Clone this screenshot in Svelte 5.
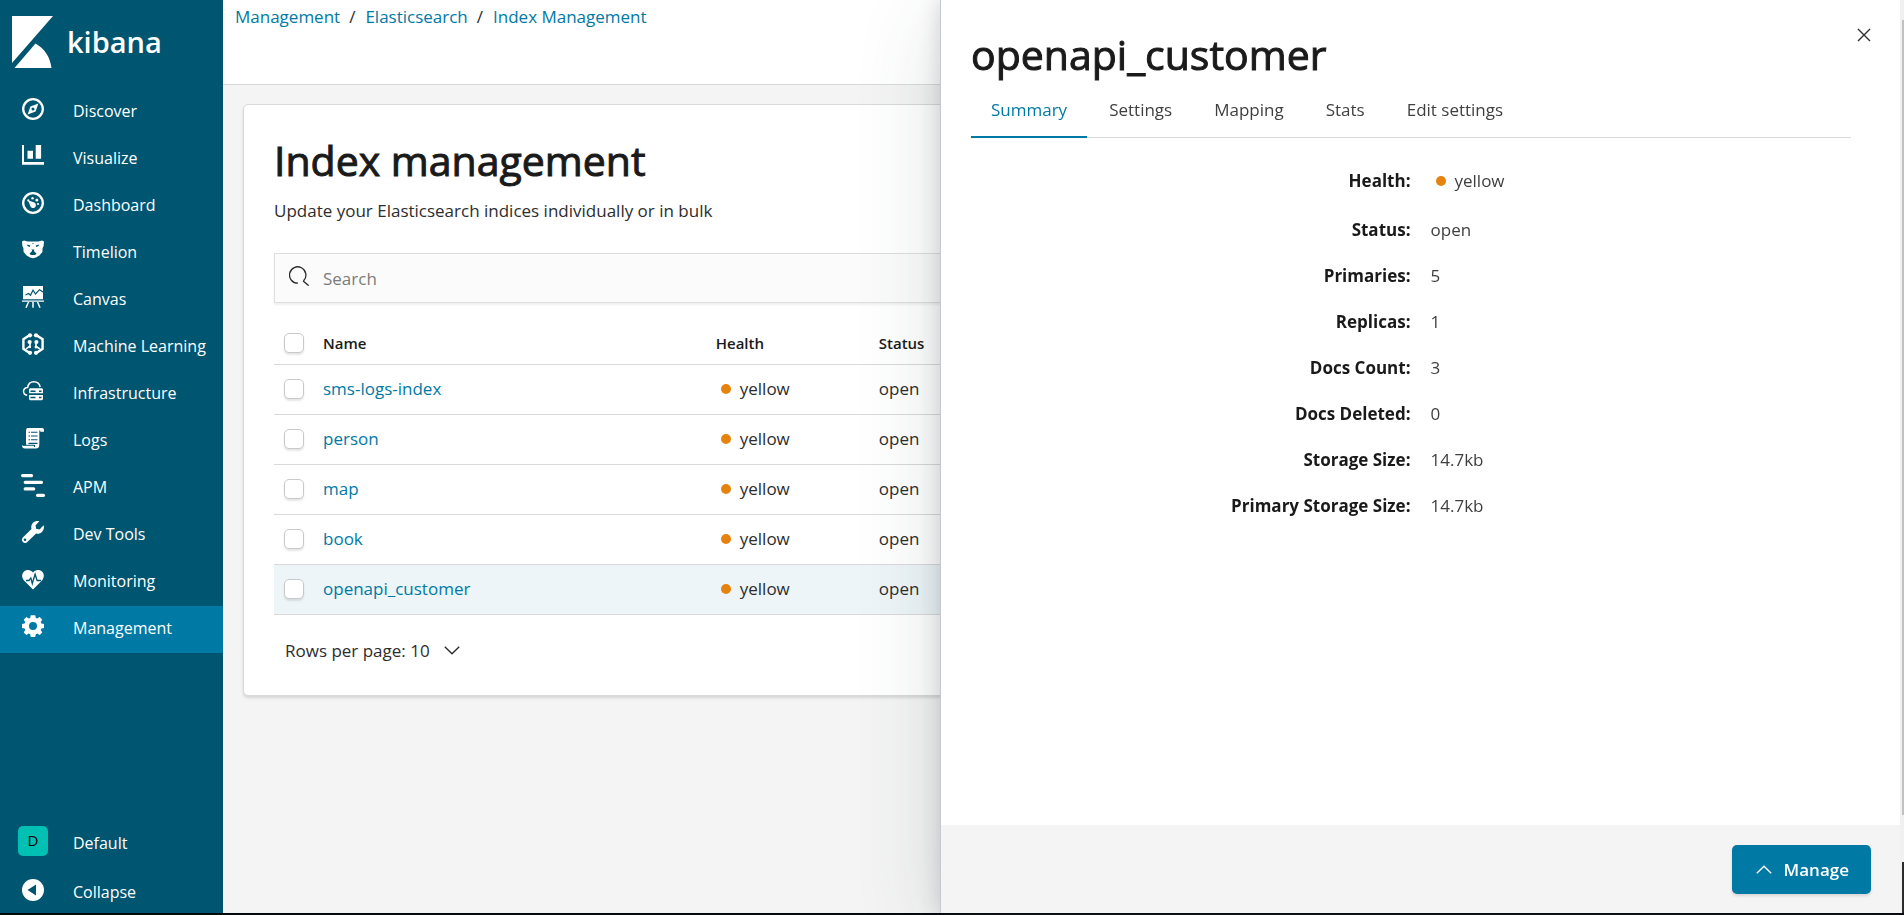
<script>
  const apps = ['Discover', 'Visualize', 'Dashboard', 'Timelion', 'Canvas', 'Machine Learning', 'Infrastructure', 'Logs', 'APM', 'Dev Tools', 'Monitoring', 'Management'];
  const crumbs = ['Management', 'Elasticsearch', 'Index Management'];
  const indices = ['sms-logs-index', 'person', 'map', 'book', 'openapi_customer'];
  const tabs = ['Summary', 'Settings', 'Mapping', 'Stats', 'Edit settings'];
  const details = [
    ['Health:', 'yellow'],
    ['Status:', 'open'],
    ['Primaries:', '5'],
    ['Replicas:', '1'],
    ['Docs Count:', '3'],
    ['Docs Deleted:', '0'],
    ['Storage Size:', '14.7kb'],
    ['Primary Storage Size:', '14.7kb']
  ];
  let activeTab = $state('Summary');
  let selected = $state('openapi_customer');
</script>

{#snippet icon(name)}
  <svg class="app-icon" viewBox="0 0 22 22" aria-hidden="true">
    {#if name === 'Discover'}
      <circle cx="11" cy="11" r="9.8" fill="none" stroke="currentColor" stroke-width="2.3" />
      <path fill="currentColor" fill-rule="evenodd" d="M16.4 5.6 13.6 13.4 5.6 16.4 8.4 8.6ZM11 9.5a1.5 1.5 0 1 0 0 3 1.5 1.5 0 0 0 0-3Z" />
    {:else if name === 'Visualize'}
      <path fill="currentColor" d="M0 0h2v17h20v2.8H0ZM5.5 5.8H11v8H5.5ZM13.7 0h5.4v13.8h-5.4Z" />
    {:else if name === 'Dashboard'}
      <circle cx="11" cy="11" r="9.8" fill="none" stroke="currentColor" stroke-width="2.3" />
      <path fill="currentColor" d="M6 8.2 12.4 10.6a2.9 2.9 0 1 1-4.2 3.2Z" />
      <g fill="currentColor"><circle cx="10.5" cy="6.2" r="1.2" /><circle cx="14.8" cy="8" r="1.5" /><circle cx="16" cy="12" r="1.1" /><circle cx="6.3" cy="8.4" r="1.1" /></g>
    {:else if name === 'Timelion'}
      <path fill="currentColor" d="M0 2.500 2 1.500 5.500 2.600h11L20 1.500l2 1-.4 4.500-1 2-.2 4-3 3.400-3.400 2-3 .8-3-.8-3.400-2-3-3.400-.2-4-1-2Z" />
      <path fill="#005571" d="m5.300 5.400 3 1.200-.5 1.300-2.500-.8ZM16.700 5.400l-3 1.200.5 1.300 2.500-.8ZM9.500 10.600h3l-.7 1.400 2.700 2.400-1.300 1.500H8.800l-1.300-1.500 2.700-2.400ZM10 4.300h2l-1 1Z" />
    {:else if name === 'Canvas'}
      <path fill="currentColor" d="M1 0h20v13.3H1ZM0 14.4h22v1.4H0Z" />
      <path fill="none" stroke="#005571" stroke-width="1.2" d="m3.5 9 3-1.5 2 1.7 2.5-5L13.5 8l4-4.3L21 6" />
      <path fill="none" stroke="currentColor" stroke-width="1.5" d="M6.5 16 4 21.8M11 16v5.8M15.5 16l2.5 5.8" />
    {:else if name === 'Machine Learning'}
      <path fill="none" stroke="currentColor" stroke-width="2.4" d="M8.3 1.8 1.4 6.2v9.6l6.6 4.4M13.7 1.8l6.9 4.4v9.6L14 20.2" />
      <path fill="none" stroke="currentColor" stroke-width="1.6" d="M8 9v3.8L4 16M14 8.5v4.8l4 2.7" />
      <g fill="currentColor"><circle cx="8" cy="2.3" r="2.1" /><circle cx="14" cy="2.3" r="2.1" /><circle cx="7.6" cy="9" r="2.1" /><circle cx="14.4" cy="9" r="2.1" /><circle cx="8" cy="19.8" r="2.1" /><circle cx="14" cy="19.8" r="2.1" /><circle cx="14" cy="14" r="1.5" /><circle cx="8" cy="14" r="1.2" /></g>
    {:else if name === 'Infrastructure'}
      <path fill="none" stroke="currentColor" stroke-width="1.5" d="M5.2 15.2C2.8 14.8 1.5 13.3 1.5 11.2S3.2 7.6 5.6 7.6C6.2 4 8.4 1.8 11.8 1.8c3.6 0 5.9 2.1 6.3 5.4" />
      <path fill="currentColor" d="M8 8.3h12l1 1v4H7v-4ZM7 15h14v4.2l-1 1H8l-1-1Z" />
      <path stroke="#005571" stroke-width="1.5" d="M8.5 11.3h5M17 11.3h2.5M8.5 17.6h5M17 17.6h2.5" />
    {:else if name === 'Logs'}
      <path fill="currentColor" d="M5 1h14.6v2.5h-2.3V18c0 2.4-1.3 3.6-3.4 3.6H3C1.2 21.6 0 20.5 0 18.6h4V5.5C4 3 4.2 1.8 5 1Z" />
      <path fill="currentColor" d="M18.3 4.8V2.500c0-1 .8-1.500 1.800-1.500s1.900.7 1.900 1.900v1.900Z" />
      <path stroke="#005571" stroke-width="1.1" d="M6.500 5.300H8M9 5.300h6.500M6.500 9H8M9 9h6.500M6.500 12.700H8M9 12.700h6.500M6.500 16.400h9M1 18.200h11.500M12.500 18v2" />
    {:else if name === 'APM'}
      <path stroke="currentColor" stroke-width="3.2" stroke-linecap="round" d="M.6 1.600h9M3.200 8.300h16.300M3.200 14.900h8.500M15.500 21.300h6" />
    {:else if name === 'Dev Tools'}
      <path fill="currentColor" fill-rule="evenodd" d="M17.300.3c-2-.7-4.500-.3-6.300 1.500-1.700 1.700-2.100 4-1.500 6.200L.8 16.500c-1.200 1.300-1.200 3.300.1 4.500 1.200 1.200 3.200 1.200 4.500 0l8.700-8.500c2.100.5 4.300 0 5.900-1.600 1.900-1.800 2.400-4.400 1.600-6.600L17.500 8.400l-3.300-.6-.7-3.400ZM3 17.500a1.300 1.300 0 1 1 0 2.600 1.300 1.300 0 0 1 0-2.600Z" />
    {:else if name === 'Monitoring'}
      <path fill="currentColor" d="M11 4.500C9 1.500 4.800 1.200 2.300 3.300-.4 5.700-.6 9.500 2 12.500l9 9 9-9c2.600-3 2.400-6.800-.3-9.200C17.200 1.200 13 1.500 11 4.500Z" />
      <path fill="none" stroke="#005571" stroke-width="1.3" d="M4 12.500h3l1.800-2.600 1.500 5.600 2.800-9.300 2 6.300h4" />
    {:else}
      <path fill="currentColor" fill-rule="evenodd" d="M8.800.2h4.400l.6 2.700 1.500.7L17.700 2 20.300 4.700 18.700 7l.7 1.500 2.600.5v4l-2.600.6-.7 1.500 1.600 2.300-2.700 2.700-2.300-1.500-1.500.6-.6 2.800H8.800l-.6-2.800-1.500-.6-2.300 1.500-2.700-2.700 1.500-2.300-.6-1.500L0 13V9l2.600-.5L3.200 7 1.700 4.700 4.400 2l2.300 1.500 1.500-.6ZM11 7a4 4 0 1 0 0 8 4 4 0 0 0 0-8Z" />
    {/if}
  </svg>
{/snippet}

<div class="page">
  <div class="workspace">
    <nav class="sidebar" aria-label="Applications">
      <a class="brand" href="#home">
        <svg class="brand-mark" viewBox="0 0 41 52" aria-hidden="true">
          <path fill="currentColor" d="M0 0h41L0 47ZM23.5 27.5C33 33 38 41 39.5 52H2.5Z" />
        </svg>
        <span>kibana</span>
      </a>
      <ul class="apps">
        {#each apps as app}
          <li><a class="nav-link" class:current={app === 'Management'} href="#{app}">{@render icon(app)}<span>{app}</span></a></li>
        {/each}
      </ul>
      <div class="sidebar-foot">
        <a class="nav-link" href="#spaces"><span class="space">D</span><span class="label">Default</span></a>
        <button class="nav-link" type="button">
          <svg class="app-icon" viewBox="0 0 22 22" aria-hidden="true"><path fill="currentColor" fill-rule="evenodd" d="M11 0a11 11 0 1 1 0 22 11 11 0 0 1 0-22ZM14 5.500 5.500 11l8.500 5.500Z" /></svg>
          <span class="label">Collapse</span>
        </button>
      </div>
    </nav>

    <main>
      <header>
        <ol class="crumbs">
          {#each crumbs as crumb}<li><a href="#{crumb}">{crumb}</a></li>{/each}
        </ol>
      </header>
      <section class="card">
        <h1>Index management</h1>
        <p>Update your Elasticsearch indices individually or in bulk</p>
        <div class="search">
          <svg viewBox="0 0 20 20" aria-hidden="true"><path fill="none" stroke="currentColor" stroke-width="1.3" d="M9 17.200A8.200 8.200 0 1 1 14.800 14.500L14.500 15.200 19.600 19.600" /></svg>
          <input type="search" placeholder="Search" aria-label="Search" />
        </div>
        <table>
          <colgroup><col class="col-check" /><col class="col-name" /><col class="col-health" /><col /></colgroup>
          <thead>
            <tr><th><input type="checkbox" aria-label="Select all rows" /></th><th>Name</th><th>Health</th><th>Status</th></tr>
          </thead>
          <tbody>
            {#each indices as name}
              <tr class:selected={name === selected}>
                <td><input type="checkbox" aria-label="Select {name}" /></td>
                <td><button class="link" type="button" onclick={() => (selected = name)}>{name}</button></td>
                <td><span class="health"><i></i>yellow</span></td>
                <td>open</td>
              </tr>
            {/each}
          </tbody>
        </table>
        <button class="rows" type="button">
          Rows per page: 10
          <svg viewBox="0 0 16 9" aria-hidden="true"><path fill="none" stroke="currentColor" stroke-width="1.4" d="m.8.8 7.200 7 7.200-7" /></svg>
        </button>
      </section>
    </main>
  </div>

  <div class="taskbar"></div>

  <aside class="flyout" aria-labelledby="flyout-title">
    <button class="close" type="button" aria-label="Close">
      <svg viewBox="0 0 14 14" aria-hidden="true"><path stroke="currentColor" stroke-width="1.4" d="m1 1 12 12M13 1 1 13" /></svg>
    </button>
    <div class="flyout-head">
      <h2 id="flyout-title">openapi_customer</h2>
      <div class="tabs" role="tablist">
        {#each tabs as tab}
          <button type="button" role="tab" aria-selected={tab === activeTab} onclick={() => (activeTab = tab)}>{tab}</button>
        {/each}
      </div>
    </div>
    <dl>
      {#each details as [label, value]}
        <div class="detail">
          <dt>{label}</dt>
          <dd>{#if value === 'yellow'}<span class="health"><i></i>{value}</span>{:else}{value}{/if}</dd>
        </div>
      {/each}
    </dl>
    <footer>
      <button class="manage" type="button">
        <svg viewBox="0 0 16 9" aria-hidden="true"><path fill="none" stroke="currentColor" stroke-width="1.4" d="m.8 8.200 7.200-7 7.200 7" /></svg>
        Manage
      </button>
    </footer>
  </aside>

  <div class="scrollbar"><div class="thumb"></div><div class="corner"></div></div>
</div>

<style>
  :global(body) { margin: 0; background: #f4f4f4; }
  .page {
    height: 100vh;
    display: flex;
    flex-direction: column;
    overflow: hidden;
    color: #2d2d2d;
    font: 17px/26px "Open Sans", sans-serif;
  }
  .page :global(*) { box-sizing: border-box; }
  button, input { font: inherit; color: inherit; }
  button { border: 0; padding: 0; background: none; cursor: pointer; }
  a { color: #0079a5; text-decoration: none; }
  ul, ol, dl, dd, p, h1, h2 { margin: 0; padding: 0; list-style: none; }
  h1, h2 { font-size: 41px; line-height: 50px; font-weight: 400; color: #1a1a1a; -webkit-text-stroke: 1px #1a1a1a; }

  .workspace { flex: 1; min-height: 0; display: flex; }
  .sidebar { flex: none; width: 223px; display: flex; flex-direction: column; background: #005571; color: #fff; }
  .brand { display: flex; gap: 14px; height: 89px; padding: 16px 12px; color: #fff; font: 600 29px/52px "Open Sans", sans-serif; }
  .brand-mark { width: 41px; height: 52px; }
  .nav-link { display: flex; width: 100%; height: 47px; align-items: flex-start; padding: 9px 0 0 22px; gap: 29px; color: #fff; font-size: 16px; line-height: 26px; }
  .current { background: #0079a5; }
  .app-icon { flex: none; width: 22px; height: 22px; overflow: visible; }
  .sidebar-foot { margin-top: auto; display: flex; flex-direction: column; gap: 2px; }
  .sidebar-foot .nav-link { align-items: center; padding-top: 0; }
  .label { padding-top: 4px; }
  .space { width: 30px; height: 30px; margin: 0 -4px; border-radius: 5px; background: #00bfb3; color: #000; font-size: 15px; line-height: 28px; text-align: center; }

  main { flex: 1; min-width: 0; }
  header { height: 85px; padding: 4px 12px; border-bottom: 1px solid #d9d9d9; background: #fff; }
  .crumbs { display: flex; }
  .crumbs li + li::before { content: "/"; margin: 0 10px 0 9px; }
  .card { margin: 19px 20px; padding: 30px; border: 1px solid #d9d9d9; border-radius: 5px; background: #fff; box-shadow: 0 2px 3px rgba(0, 0, 0, 0.12); }
  .card p { margin: 13px 0 29px; }
  .search { display: flex; align-items: center; gap: 14px; height: 50px; padding: 0 14px; border: 1px solid #dedede; background: #fbfbfb; box-shadow: 0 2px 2px rgba(0, 0, 0, 0.06); }
  .search svg { width: 20px; height: 20px; margin-bottom: 4px; }
  .search input { flex: 1; border: 0; padding: 2px 0 0; outline: 0; background: none; }
  .search input::placeholder { color: #7b7b7b; opacity: 1; }

  table { width: 100%; margin-top: 19px; border-collapse: collapse; table-layout: fixed; }
  .col-check { width: 39px; }
  .col-name { width: 25%; }
  .col-health { width: 163px; }
  th, td { height: 50px; padding: 0 10px; border-bottom: 1px solid #d9d9d9; text-align: left; }
  th:nth-child(n + 3), td:nth-child(n + 3) { padding-left: 8px; }
  th { height: 42px; color: #1a1a1a; font-size: 15px; font-weight: 600; }
  .selected { background: #edf5f8; }
  input[type="checkbox"] { appearance: none; display: block; width: 20px; height: 20px; margin: 0; border: 1px solid #c9c9c9; border-radius: 5px; background: #fff; box-shadow: 0 2px 2px rgba(0, 0, 0, 0.1); }
  .link { color: #0079a5; }
  .health { display: flex; align-items: center; gap: 9px; padding-left: 5px; }
  .health i { width: 10px; height: 10px; border-radius: 50%; background: #e5830e; }
  .rows { display: flex; align-items: center; gap: 14px; margin: 23px 0 1px 11px; }
  .rows svg, .manage svg { width: 16px; height: 9px; }

  .flyout { position: fixed; top: 0; right: 4px; bottom: 2px; width: calc(50vw + 8px); display: flex; flex-direction: column; border-left: 1px solid #c5cad0; background: #fff; box-shadow: 0 0 20px rgba(50, 60, 70, 0.2), 0 20px 80px rgba(50, 60, 70, 0.16); }
  .close { position: absolute; top: 20px; right: 21px; width: 30px; height: 30px; }
  .close svg { display: block; width: 14px; height: 14px; margin: auto; }
  .flyout-head { padding: 29px 49px 0 30px; }
  .tabs { display: flex; gap: 2px; margin-top: 6px; border-bottom: 1px solid #d9d9d9; color: #3f3f3f; }
  .tabs button { height: 53px; margin-bottom: -1px; padding: 0 20px 2px; border-bottom: 2px solid transparent; }
  .tabs button[aria-selected="true"] { border-color: #0079a5; color: #0079a5; }
  dl { flex: 1; padding: 30px 30px 0; color: #3f3f3f; }
  .detail { display: grid; grid-template-columns: 1fr 1fr; gap: 20px; margin-bottom: 20px; }
  .detail .health { margin-bottom: 3px; }
  dt { font-weight: 700; color: #1a1a1a; text-align: right; }
  footer { display: flex; justify-content: flex-end; padding: 20px 29px 19px; background: #f4f4f4; }
  .manage { display: flex; align-items: center; gap: 12px; height: 49px; padding: 0 22px 0 24px; border-radius: 5px; background: #0079a5; color: #fff; font-weight: 600; box-shadow: 0 2px 3px rgba(0, 0, 0, 0.12); }

  .taskbar { flex: none; height: 2px; background: #05080c; }
  .scrollbar { position: fixed; top: 0; right: 0; bottom: 2px; width: 4px; padding: 20px 0 0 2px; display: flex; flex-direction: column; justify-content: space-between; background: #f1f1f1; }
  .thumb { height: 89%; background: #c1c1c1; }
  .corner { height: 51px; background: #2b2b2b; }
</style>
